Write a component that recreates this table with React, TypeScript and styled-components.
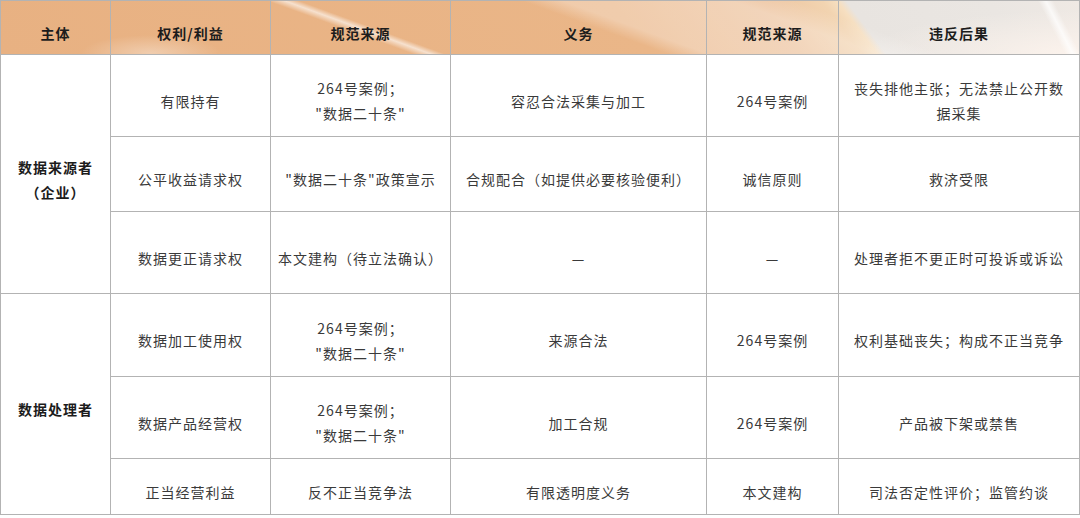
import React from "react";
import styled, { createGlobalStyle } from "styled-components";

const GlobalStyle = createGlobalStyle`
  html, body { margin: 0; padding: 0; background: #ffffff; }
  body { font-family: "Noto Sans CJK SC", "Noto Sans", sans-serif; }
  * { box-sizing: border-box; }
`;

const LINE = "#b3b3b3";

const Table = styled.div`
  width: 1080px;
  display: flex;
  flex-direction: column;
`;

const HeaderRow = styled.div`
  display: grid;
  grid-template-columns: 109px 160px 180px 256px 132px 241px;
  height: 55px;
  border: 1px solid ${LINE};
  background:
    linear-gradient(63deg, transparent 948px, rgba(255, 255, 255, 0.75) 955px, transparent 962px),
    linear-gradient(20deg, transparent 141px, rgba(255, 255, 255, 0.6) 147px, transparent 152px),
    linear-gradient(20deg, transparent 228px, rgba(255, 255, 255, 0.3) 242px, rgba(255, 255, 255, 0.3) 300px, transparent 322px),
    radial-gradient(ellipse 70px 18px at 150px 52px, rgba(255, 255, 255, 0.35), transparent),
    radial-gradient(ellipse 220px 45px at 1080px 54px, rgba(255, 245, 238, 0.85), rgba(255, 245, 238, 0)),
    linear-gradient(53deg, #e8b182 0, #eab688 520px, #edc39e 640px, #f2d4b1 688px, #f6dfc1 700px, #e8e4e0 707px, #eae6e2 820px, #efe9e4 895px);
`;

const HeadCell = styled.div<{ $first?: boolean }>`
  display: flex;
  align-items: center;
  justify-content: center;
  padding-top: 11px;
  border-left: ${(p) => (p.$first ? "none" : `1px solid ${LINE}`)};
  font-size: 14px;
  font-weight: 700;
  letter-spacing: 1px;
  color: #1c1c1c;
`;

const Body = styled.div`
  display: grid;
  grid-template-columns: 109px 159px 179px 255px 131px 240px;
  grid-template-rows: 81px 74px 81px 82px 81px 55px;
  gap: 1px;
  padding: 0 1px 1px 1px;
  background: ${LINE};
`;

const Cell = styled.div<{ $span?: number; $bold?: boolean }>`
  grid-row: ${(p) => (p.$span ? `span ${p.$span}` : "auto")};
  background: #ffffff;
  display: flex;
  align-items: center;
  justify-content: center;
  text-align: center;
  padding: 11px 4px 0 4px;
  font-size: 14px;
  line-height: 25px;
  letter-spacing: 1px;
  font-weight: ${(p) => (p.$bold ? 700 : 400)};
  color: ${(p) => (p.$bold ? "#1c1c1c" : "#3a3a3a")};
  white-space: nowrap;
`;

const headers = ["主体", "权利/利益", "规范来源", "义务", "规范来源", "违反后果"];

type Row = string[][];

const groups: { subject: string[]; rows: Row[] }[] = [
  {
    subject: ["数据来源者", "（企业）"],
    rows: [
      [["有限持有"], ["264号案例；", "\"数据二十条\""], ["容忍合法采集与加工"], ["264号案例"], ["丧失排他主张；无法禁止公开数", "据采集"]],
      [["公平收益请求权"], ["\"数据二十条\"政策宣示"], ["合规配合（如提供必要核验便利）"], ["诚信原则"], ["救济受限"]],
      [["数据更正请求权"], ["本文建构（待立法确认）"], ["—"], ["—"], ["处理者拒不更正时可投诉或诉讼"]],
    ],
  },
  {
    subject: ["数据处理者"],
    rows: [
      [["数据加工使用权"], ["264号案例；", "\"数据二十条\""], ["来源合法"], ["264号案例"], ["权利基础丧失；构成不正当竞争"]],
      [["数据产品经营权"], ["264号案例；", "\"数据二十条\""], ["加工合规"], ["264号案例"], ["产品被下架或禁售"]],
      [["正当经营利益"], ["反不正当竞争法"], ["有限透明度义务"], ["本文建构"], ["司法否定性评价；监管约谈"]],
    ],
  },
];

const Lines = ({ lines }: { lines: string[] }) => (
  <span>
    {lines.map((l, i) => (
      <React.Fragment key={i}>
        {i > 0 && <br />}
        {l}
      </React.Fragment>
    ))}
  </span>
);

export default function App() {
  return (
    <>
      <GlobalStyle />
      <Table>
        <HeaderRow>
          {headers.map((h, i) => (
            <HeadCell key={i} $first={i === 0}>
              {h}
            </HeadCell>
          ))}
        </HeaderRow>
        <Body>
          {groups.map((g, gi) => (
            <React.Fragment key={gi}>
              <Cell $span={g.rows.length} $bold>
                <Lines lines={g.subject} />
              </Cell>
              {g.rows.map((r, ri) =>
                r.map((c, ci) => (
                  <Cell key={`${ri}-${ci}`}>
                    <Lines lines={c} />
                  </Cell>
                ))
              )}
            </React.Fragment>
          ))}
        </Body>
      </Table>
    </>
  );
}
